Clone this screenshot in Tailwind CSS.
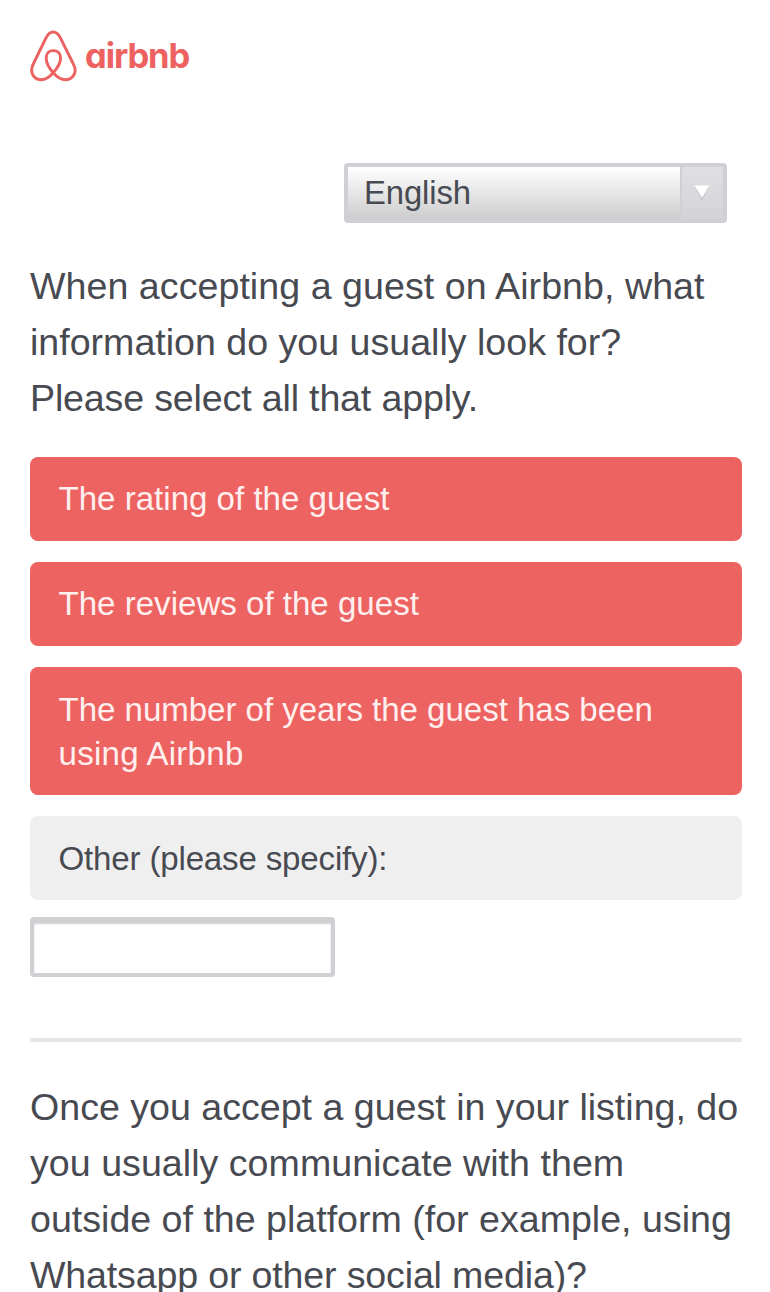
<!DOCTYPE html>
<html lang="en">
<head>
<meta charset="utf-8">
<title>Airbnb survey</title>
<script src="https://cdn.jsdelivr.net/npm/@tailwindcss/browser@4"></script>
</head>
<body class="bg-white font-['Liberation_Sans',Arial,sans-serif] text-[#484a52]">
<main class="h-[1292px] w-[770px] overflow-hidden pl-[30px] pr-[28px] pt-[30px]">
  <header class="flex h-[52px] items-start text-[#ed6160]">
    <svg class="h-[52px] w-[47px] shrink-0" viewBox="0 0 47 52" fill="none" stroke="currentColor" stroke-width="2.9" aria-hidden="true">
      <path d="M23.2 42.7C19 38 16.2 33 16.2 28C16.2 23.3 19 20.6 23.2 20.6C27.5 20.6 30.6 23.3 30.6 28C30.6 33 27.5 38 23.2 42.7C19 47.5 15 49.7 11.5 49.7C5.5 49.7 1.6 45.5 1.6 40C1.6 37.5 2.5 35.5 4 32.5L16 7.8C18 3.8 20 2 23.2 2C26.4 2 28.4 3.8 30.4 7.8L42.6 32.5C44 35.5 45.2 37.5 45.2 40C45.2 45.5 41 49.7 35.2 49.7C31.5 49.7 27.5 47.5 23.2 42.7Z"/>
    </svg>
    <span class="ml-[8px] mt-[6px] whitespace-nowrap font-[Inter] text-[34.5px] font-bold leading-[40px] tracking-[-1.1px] [font-feature-settings:'cv11'_1]">airbnb</span>
  </header>

  <div class="mt-[81px] ml-[314px] flex h-[60px] w-[383px] rounded-[4px] border-4 border-[#d0d0d4] bg-[#d9d9dd]">
    <div class="flex-1 border-r-2 border-[#d0d0d4] bg-linear-to-b from-white to-[#cdcdcd] pl-[16px] text-[32.8px] leading-[52px] tracking-[-0.1px]">English</div>
    <div class="flex w-[41px] bg-linear-to-b from-[#e0e0e3] to-[#d3d3d7] pl-[11.5px] pt-[18px]">
      <svg class="h-[15px] w-[16px]" viewBox="0 0 16 15" aria-hidden="true"><path d="M1 2H15L8 15Z" fill="#bbbbbf"/><path d="M0.5 0.5H15.5L8 13Z" fill="#fff"/></svg>
    </div>
  </div>

  <h2 class="mt-[35px] whitespace-nowrap text-[37.6px] leading-[56px]"><span class="block tracking-[0.05px]">When accepting a guest on Airbnb, what</span><span class="block">information do you usually look for?</span><span class="block tracking-[-0.16px]">Please select all that apply.</span></h2>

  <div class="mt-[30.5px] flex flex-col gap-[21px] text-[33.1px] leading-[44px]">
    <div class="h-[84.5px] rounded-[8px] bg-[#ed6361] pl-[28.5px] pt-[20px] text-[#fff0ef]">The rating of the guest</div>
    <div class="h-[84px] rounded-[8px] bg-[#ed6361] pl-[28.5px] pt-[20px] text-[#fff0ef]">The reviews of the guest</div>
    <div class="h-[128px] rounded-[8px] bg-[#ed6361] pl-[28.5px] pt-[20.5px] text-[#fff0ef]"><span class="block tracking-[-0.04px]">The number of years the guest has been</span><span class="block tracking-[0.25px]">using Airbnb</span></div>
    <div class="h-[84px] rounded-[8px] bg-[#efefef] pl-[28.5px] pt-[20.5px] tracking-[-0.17px]">Other (please specify):</div>
  </div>

  <div class="mt-[17px] h-[59.5px] w-[305px] rounded-[4px] border-4 border-[#d0d0d4] bg-white shadow-[inset_0_3px_2px_#d0d0d4]"></div>
  <div class="mt-[61.5px] h-[4px] bg-[#e6e6e6]"></div>

  <h2 class="mt-[37px] whitespace-nowrap text-[37.6px] leading-[56px]"><span class="block">Once you accept a guest in your listing, do</span><span class="block tracking-[0.03px]">you usually communicate with them</span><span class="block">outside of the platform (for example, using</span><span class="block tracking-[-0.16px]">Whatsapp or other social media)?</span></h2>
</main>
</body>
</html>
